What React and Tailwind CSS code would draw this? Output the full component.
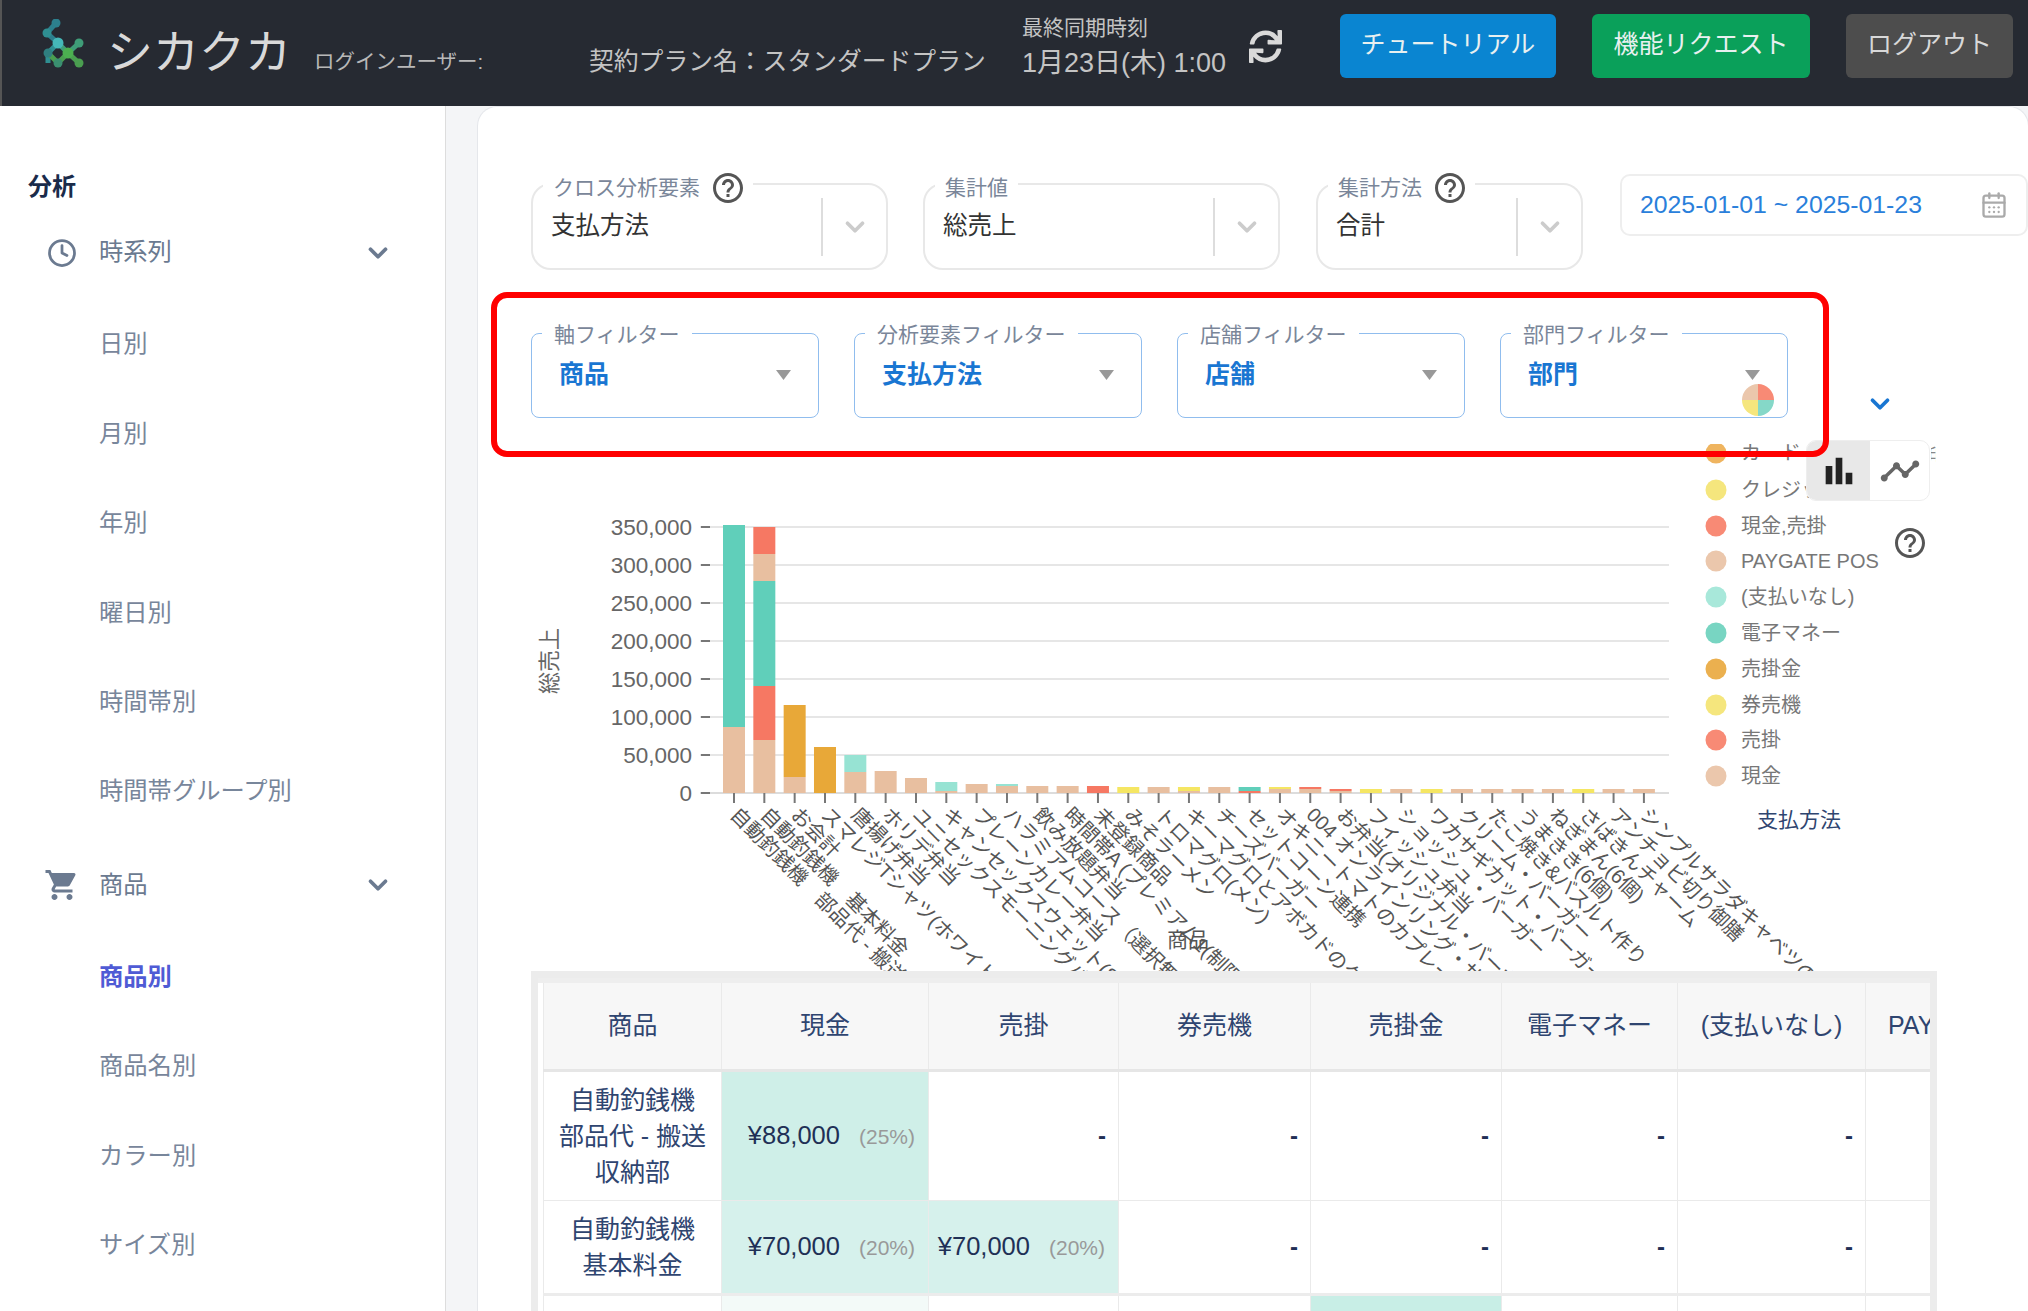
import { ChevronDown, Clock, CalendarDays } from 'lucide-react';
import { FaSync } from 'react-icons/fa';
import { MdShoppingCart, MdHelpOutline, MdBarChart, MdTimeline } from 'react-icons/md';

const TAN = '#e8bfa0';
const TEAL = '#60cfba';
const RED = '#f67863';
const ORANGE = '#e8a838';
const MINT = '#97e3d3';
const YELLOW = '#f5e663';

// each bar: stacked [value px, colour] from the bottom up
const BARS = [
  [[66, TAN], [202, TEAL]],
  [[53, TAN], [54, RED], [105, TEAL], [27, TAN], [27, RED]],
  [[16, TAN], [72, ORANGE]],
  [[46, ORANGE]],
  [[21, TAN], [17, MINT]],
  [[22, TAN]],
  [[15, TAN]],
  [[2, TAN], [9, MINT]],
  [[9, TAN]],
  [[7, TAN], [2, MINT]],
  [[7, TAN]],
  [[7, TAN]],
  [[7, RED]],
  [[6, YELLOW]],
  [[6, TAN]],
  [[2, TAN], [4, YELLOW]],
  [[6, TAN]],
  [[2, RED], [4, TEAL]],
  [[4, TAN], [2, YELLOW]],
  [[4, TAN], [2, RED]],
  [[2, TAN], [2, RED]],
  [[4, YELLOW]],
  [[4, TAN]],
  [[4, YELLOW]],
  [[4, TAN]],
  [[4, TAN]],
  [[4, TAN]],
  [[4, TAN]],
  [[4, YELLOW]],
  [[4, TAN]],
  [[4, TAN]],
];

const X_LABELS = [
  '自動釣銭機　部品代 - 搬送…',
  '自動釣銭機　基本料金',
  'お会計',
  'スマレジTシャツ(ホワイト',
  '唐揚げ弁当',
  'ホリデ弁当',
  'ユニセックスモーニングバック(ナ',
  'キャンセックスウェット(S)',
  'プレーンカレー弁当',
  'ハラミアムコース（選択無し）',
  '飲み放題弁当',
  '時間帯A (プレミアム1(制限',
  '未登録商品',
  'みそラーメン',
  'トロマグロ(メン)',
  'キーマグロとアボカドのタル',
  'チーズバーガー',
  'セットコーン連携',
  'オキニートマトのカプレーゼ…',
  '004 オンラインリング・サイズ…',
  'お弁当(オリジナル・バーガー…',
  'フィッシュ弁当',
  'ショッシュ・バーガー',
  'ワカサギカット・バーガー',
  'クリーム・バーガー',
  'たこ焼き&バスルト作り',
  'うまきき(6個)',
  'ねぎまん(6個)',
  'さばきんチャーム',
  'アンチョビ切り御膳',
  'シンプルサラダキャベツのしらす',
];

const LEGEND = [
  ['カード', '#efb45f', 452],
  ['クレジット', '#f5e67d', 489],
  ['現金,売掛', '#f88a75', 525],
  ['PAYGATE POS', '#ebc7ac', 560],
  ['(支払いなし)', '#a8e8da', 596],
  ['電子マネー', '#78d5c2', 632],
  ['売掛金', '#ebb04f', 668],
  ['券売機', '#f5e67d', 704],
  ['売掛', '#f88a75', 739],
  ['現金', '#ebc7ac', 775],
];

const Y_TICKS = [
  ['350,000', 526],
  ['300,000', 564],
  ['250,000', 602],
  ['200,000', 640],
  ['150,000', 678],
  ['100,000', 716],
  ['50,000', 754],
  ['0', 792],
];

function tickX(i) {
  return 734 + 30.33 * i;
}

function Logo() {
  return (
    <svg viewBox="0 0 42 50" className="w-[42px] h-[50px] mt-[19px] shrink-0">
      <path d="M14 4 L5 14 L16 24" stroke="#2c7f8d" strokeWidth="5" fill="none" />
      <path d="M16 24 L6 34 L6 44" stroke="#2f8f92" strokeWidth="5" fill="none" />
      <path d="M16 24 L26 34 L37 24" stroke="#3f9d78" strokeWidth="5" fill="none" />
      <path d="M6 34 L16 44 L26 34 L37 44" stroke="#4a9e50" strokeWidth="5" fill="none" />
      <circle cx="14" cy="4" r="4.5" fill="#2c7f8d" />
      <circle cx="5" cy="14" r="4.5" fill="#2f8f92" />
      <circle cx="16" cy="24" r="5.5" fill="#45b8b8" />
      <circle cx="37" cy="24" r="4.5" fill="#3f9d78" />
      <circle cx="6" cy="34" r="4.5" fill="#2f7f80" />
      <circle cx="26" cy="34" r="5.5" fill="#4caf50" />
      <circle cx="16" cy="44" r="4.5" fill="#3a8f70" />
      <circle cx="37" cy="44" r="4.5" fill="#4a9e50" />
    </svg>
  );
}

function Header() {
  return (
    <header className="flex items-start h-[106px] shrink-0 bg-[#262a32] border-l-2 border-[#555] pl-[40px]">
      <Logo />
      <span className="ml-[23px] mt-[22px] text-[46px] leading-[60px] text-[#d9d9d9] w-[184px] shrink-0">シカクカ</span>
      <div className="ml-[23px] mt-[48px] w-[275px] text-[20.5px] leading-[28px] text-[#b8b8b8]">ログインユーザー:</div>
      <div className="mt-[45px] w-[433px] text-[24.8px] leading-[34px] text-[#c4c4c4]">契約プラン名：スタンダードプラン</div>
      <div className="mt-[14px] w-[227px] text-[#c4c4c4]">
        <div className="text-[21px] leading-[28px]">最終同期時刻</div>
        <div className="mt-[3px] text-[27px] leading-[36px]">1月23日(木) 1:00</div>
      </div>
      <FaSync className="mt-[30px] text-[33px] text-[#d9d9d9] shrink-0" />
      <div className="ml-[58px] mt-[14px] flex gap-[36px] text-[25px] text-[#e8f0f0]">
        <button className="w-[216px] h-[64px] pb-[2px] rounded-[6px] bg-[#0a85d1]">チュートリアル</button>
        <button className="w-[218px] h-[64px] pb-[2px] rounded-[6px] bg-[#0aa05a]">機能リクエスト</button>
        <button className="w-[167px] h-[64px] pb-[2px] rounded-[6px] bg-[#4d4d4d] text-[#d8d8d8]">ログアウト</button>
      </div>
    </header>
  );
}

function NavGroup({ icon, label }) {
  return (
    <div className="flex items-center h-[89px] pl-[44px] pr-[52px] text-[24.3px] text-[#6b7a90]">
      <span className="w-[55px] flex">{icon}</span>
      <span className="flex-1">{label}</span>
      <ChevronDown className="w-[30px] h-[30px]" strokeWidth={3} />
    </div>
  );
}

function NavItem({ label, active }) {
  return (
    <div className={`flex items-center h-[89.4px] pl-[99px] text-[24.3px] ${active ? 'font-bold text-[#4f5bd5]' : 'text-[#78869b]'}`}>
      {label}
    </div>
  );
}

function Sidebar() {
  return (
    <aside className="w-[446px] shrink-0 bg-white border-r border-[#ddd] pt-[63px]">
      <div className="pl-[28px] text-[24px] leading-[36px] font-bold text-[#1a2b4a]">分析</div>
      <div className="mt-[3px]">
        <NavGroup icon={<Clock className="w-[30px] h-[30px] ml-[3px]" strokeWidth={2.2} />} label="時系列" />
        <div className="mt-[3px]">
          {['日別', '月別', '年別', '曜日別', '時間帯別', '時間帯グループ別'].map(l => <NavItem key={l} label={l} />)}
        </div>
      </div>
      <div className="mt-[4px]">
        <NavGroup icon={<MdShoppingCart className="w-[36px] h-[36px]" />} label="商品" />
        <div className="mt-[3px]">
          <NavItem label="商品別" active />
          <NavItem label="商品名別" />
          <NavItem label="カラー別" />
          <NavItem label="サイズ別" />
        </div>
      </div>
    </aside>
  );
}

function TopSelect({ label, value, width, sepRight, help }) {
  return (
    <div className={`relative h-[87px] border-2 border-[#e8e8e8] rounded-[20px] flex items-center pl-[18px] ${width}`}>
      <div className="absolute left-[10px] -top-[12px] h-[30px] flex items-center gap-[13px] bg-white px-[10px] text-[21px] text-[#7a8699]">
        {label}
        {help && <MdHelpOutline className="text-[36px] -my-[4px] -mx-[3px] text-[#555]" />}
      </div>
      <span className="flex-1 text-[24.5px] text-[#333]">{value}</span>
      <span className={`h-[58px] border-l-2 border-[#ddd] ${sepRight}`} />
      <ChevronDown className="absolute right-[16px] w-[30px] h-[30px] text-[#ccc]" strokeWidth={3} />
    </div>
  );
}

function FilterSelect({ label, value }) {
  return (
    <div className="relative w-[288px] h-[85px] border border-[#90bdee] rounded-[8px] flex items-center justify-between pl-[27px] pr-[27px] pb-[2px]">
      <div className="absolute left-[10px] -top-[14px] h-[30px] flex items-center bg-white px-[12px] text-[21px] text-[#7a8699]">
        {label}
      </div>
      <span className="text-[25px] font-bold text-[#1976d2]">{value}</span>
      <svg viewBox="0 0 15 10" className="w-[15px] h-[10px]"><path d="M0 0 H15 L7.5 10 Z" fill="#999" /></svg>
    </div>
  );
}

function Chart() {
  return (
    <svg viewBox="531 417 1406 553" className="block w-[1406px] h-[553px]">
      <defs>
        <clipPath id="legend-clip"><rect x="1700" y="443" width="200" height="350" /></clipPath>
        <clipPath id="edge-clip"><rect x="1931" y="445" width="5" height="17" /></clipPath>
      </defs>

      <text x="1928" y="459" fontSize="16" fill="#888" clipPath="url(#edge-clip)">印</text>

      {Y_TICKS.map(([t, y]) => (
        <g key={t}>
          <line x1="700" x2="1669" y1={y} y2={y} stroke={y === 792 ? '#dcdcdc' : '#e6e6e6'} strokeWidth="2" />
          <line x1="701" x2="710" y1={y} y2={y} stroke="#777" strokeWidth="2" />
          <text x="692" y={y + 8} textAnchor="end" fontSize="22.5" fill="#666">{t}</text>
        </g>
      ))}

      {BARS.map((stack, i) => {
        const x = tickX(i);
        let y = 792;
        return (
          <g key={i}>
            <line x1={x} x2={x} y1="792" y2="802" stroke="#777" strokeWidth="2" />
            {stack.map(([h, fill], j) => {
              y -= h;
              return <rect key={j} x={x - 11} y={y} width="22" height={h} fill={fill} />;
            })}
          </g>
        );
      })}

      {X_LABELS.map((label, i) => (
        <text key={i} x={tickX(i) - 5} y="815" fontSize="20" fill="#555" transform={`rotate(45 ${tickX(i) - 5} 815)`}>
          {label}
        </text>
      ))}

      <text x="1188" y="946" textAnchor="middle" fontSize="21" fill="#555">商品</text>
      <text x="557" y="660" textAnchor="middle" fontSize="22" fill="#666" transform="rotate(-90 557 660)">総売上</text>

      <g clipPath="url(#legend-clip)">
        {LEGEND.map(([label, color, y]) => (
          <g key={label + y}>
            <circle cx="1716" cy={y} r="10.5" fill={color} />
            <text x="1741" y={y + 7} fontSize="20" fill="#777">{label}</text>
          </g>
        ))}
      </g>
      <text x="1799" y="826" textAnchor="middle" fontSize="21" fill="#2f4570">支払方法</text>
    </svg>
  );
}

function MiniPie() {
  return (
    <svg viewBox="0 0 32 32" className="absolute left-[1211px] -top-[34px] w-[32px] h-[32px]">
      <path d="M16 16 V0 A16 16 0 0 1 32 16 Z" fill="#f88a75" />
      <path d="M16 16 H32 A16 16 0 0 1 16 32 Z" fill="#85d8c8" />
      <path d="M16 16 V32 A16 16 0 0 1 0 16 Z" fill="#f5e67d" />
      <path d="M16 16 H0 A16 16 0 0 1 16 0 Z" fill="#ebc7ac" />
    </svg>
  );
}

function ChartOverlays() {
  return (
    <>
      <MiniPie />
      <ChevronDown className="absolute left-[1334px] -top-[29px] w-[30px] h-[30px] text-[#1976d2]" strokeWidth={3} />
      <div className="absolute left-[1275px] top-[22px] flex w-[124px] h-[61px] rounded-[10px] border border-[#eee] bg-white overflow-hidden">
        <span className="w-[63px] bg-[#e8e8e8] flex items-center justify-center">
          <MdBarChart className="text-[40px] text-[#222]" />
        </span>
        <span className="flex-1 flex items-center justify-center">
          <MdTimeline className="text-[42px] text-[#666]" />
        </span>
      </div>
      <MdHelpOutline className="absolute left-[1361px] top-[107px] text-[36px] text-[#555]" />
    </>
  );
}

function Dash() {
  return <td className="border border-[#eaeaea] text-right pr-[12px] text-[24px] font-bold text-[#1f3056]">-</td>;
}

function Amount({ value, pct, bg }) {
  return (
    <td className={`border border-[#eaeaea] text-right pr-[13px] text-[25.5px] text-[#1f3056] whitespace-nowrap ${bg}`}>
      {value}
      <span className="ml-[19px] text-[21px] text-[#999]">{pct}</span>
    </td>
  );
}

function DataTable() {
  const heads = ['商品', '現金', '売掛', '券売機', '売掛金', '電子マネー', '(支払いなし)', 'PAYGATE POS'];
  return (
    <div className="h-[341px] border-[7px] border-b-0 border-[#ececec] overflow-hidden bg-white">
      <div className="h-[5px] bg-[#eee]" />
      <div className="pl-[5px]">
        <table className="table-fixed border-collapse w-[1522px]">
          <colgroup>
            <col className="w-[178px]" />
            <col className="w-[207px]" />
            <col className="w-[190px]" />
            <col className="w-[192px]" />
            <col className="w-[191px]" />
            <col className="w-[176px]" />
            <col className="w-[188px]" />
            <col className="w-[200px]" />
          </colgroup>
          <thead>
            <tr className="h-[87px] bg-[#f7f7f7] border-b-[3px] border-[#e6e6e6]">
              {heads.map((h, i) => (
                <th key={h} className={`border-x border-[#eaeaea] font-normal text-[25px] text-[#2f4570] whitespace-nowrap ${i === 7 ? 'text-left pl-[22px]' : ''}`}>{h}</th>
              ))}
            </tr>
          </thead>
          <tbody>
            <tr className="h-[130px]">
              <td className="border border-[#eaeaea] text-center text-[25px] leading-[36px] text-[#2f4570]">自動釣銭機<br />部品代 - 搬送<br />収納部</td>
              <Amount value="¥88,000" pct="(25%)" bg="bg-[#cfefe8]" />
              <Dash /><Dash /><Dash /><Dash /><Dash /><td className="border border-[#eaeaea]" />
            </tr>
            <tr className="h-[94px] border-b-[3px] border-[#ececec]">
              <td className="border border-[#eaeaea] text-center text-[25px] leading-[36px] text-[#2f4570]">自動釣銭機<br />基本料金</td>
              <Amount value="¥70,000" pct="(20%)" bg="bg-[#d6f1ec]" />
              <Amount value="¥70,000" pct="(20%)" bg="bg-[#d6f1ec]" />
              <Dash /><Dash /><Dash /><Dash /><td className="border border-[#eaeaea]" />
            </tr>
            <tr className="h-[80px]">
              <td className="border border-[#eaeaea]" />
              <td className="border border-[#eaeaea] bg-[#f3faf8]" />
              <td className="border border-[#eaeaea]" />
              <td className="border border-[#eaeaea]" />
              <td className="border border-[#eaeaea] bg-[#c8eee6]" />
              <td className="border border-[#eaeaea]" />
              <td className="border border-[#eaeaea]" />
              <td className="border border-[#eaeaea]" />
            </tr>
          </tbody>
        </table>
      </div>
    </div>
  );
}

export default function App() {
  return (
    <div className="relative flex flex-col w-[2028px] h-[1311px] overflow-hidden bg-white font-['Liberation_Sans','Noto_Sans_CJK_JP',sans-serif]">
      <Header />
      <div className="flex flex-1 min-h-0">
        <Sidebar />
        <main className="flex-1 bg-[#f4f5f7] pl-[31px] pr-[38px]">
          <div className="h-full bg-white border-x border-t border-[#e5e7eb] rounded-t-[20px] pl-[53px] pt-[76px]">
            <div className="flex items-start">
              <TopSelect label="クロス分析要素" value="支払方法" width="w-[357px]" sepRight="mr-[63px]" help />
              <div className="w-[35px]" />
              <TopSelect label="集計値" value="総売上" width="w-[357px]" sepRight="mr-[63px]" />
              <div className="w-[36px]" />
              <TopSelect label="集計方法" value="合計" width="w-[267px]" sepRight="mr-[63px]" help />
              <div className="ml-[37px] -mt-[9px] w-[408px] h-[62px] shrink-0 border-2 border-[#eee] rounded-[10px] bg-white flex items-center pl-[18px] pr-[18px] justify-between">
                <span className="text-[24.8px] text-[#2a7fdb] whitespace-nowrap">2025-01-01 ~ 2025-01-23</span>
                <CalendarDays className="w-[28px] h-[28px] text-[#aaa]" />
              </div>
            </div>

            <div className="flex gap-[35px] mt-[63px]">
              <FilterSelect label="軸フィルター" value="商品" />
              <FilterSelect label="分析要素フィルター" value="支払方法" />
              <FilterSelect label="店舗フィルター" value="店舗" />
              <FilterSelect label="部門フィルター" value="部門" />
            </div>

            <div className="relative w-[1406px]">
              <Chart />
              <ChartOverlays />
              <DataTable />
            </div>
          </div>
        </main>
      </div>
      <div className="absolute left-[491px] top-[292px] w-[1338px] h-[165px] border-[6px] border-[#ff0000] rounded-[16px] pointer-events-none" />
    </div>
  );
}
